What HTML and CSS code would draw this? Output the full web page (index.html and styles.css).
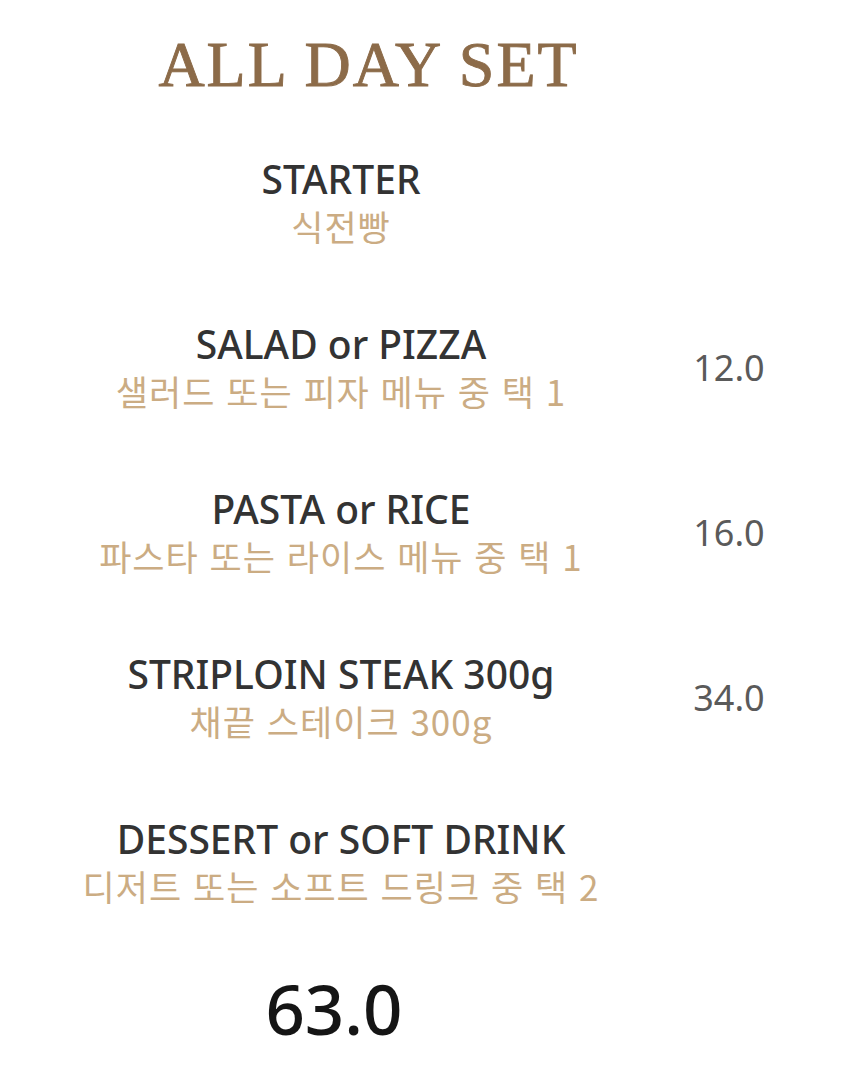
FILE: index.html
```html
<!DOCTYPE html>
<html lang="ko">
<head>
<meta charset="utf-8">
<title>ALL DAY SET</title>
<link rel="stylesheet" href="styles.css">
</head>
<body>
<main class="menu">
  <h1 class="title">ALL DAY SET</h1>
  <ul class="items">
    <li class="item">
      <div class="names">
        <div class="en">STARTER</div>
        <div class="ko">식전빵</div>
      </div>
      <div class="price"></div>
    </li>
    <li class="item">
      <div class="names">
        <div class="en">SALAD or PIZZA</div>
        <div class="ko">샐러드 또는 피자 메뉴 중 택 1</div>
      </div>
      <div class="price">12.0</div>
    </li>
    <li class="item">
      <div class="names">
        <div class="en">PASTA or RICE</div>
        <div class="ko">파스타 또는 라이스 메뉴 중 택 1</div>
      </div>
      <div class="price">16.0</div>
    </li>
    <li class="item">
      <div class="names">
        <div class="en">STRIPLOIN STEAK 300g</div>
        <div class="ko">채끝 스테이크 300g</div>
      </div>
      <div class="price">34.0</div>
    </li>
    <li class="item">
      <div class="names">
        <div class="en">DESSERT or SOFT DRINK</div>
        <div class="ko">디저트 또는 소프트 드링크 중 택 2</div>
      </div>
      <div class="price"></div>
    </li>
  </ul>
  <div class="total">63.0</div>
</main>
</body>
</html>
```
FILE: styles.css
```css
html, body {
  margin: 0;
  padding: 0;
  background: #ffffff;
}

.menu {
  width: 850px;
  height: 1068px;
  overflow: hidden;
  font-family: "Noto Sans", "Noto Sans CJK KR", sans-serif;
}

.title {
  margin: 0;
  padding-top: 33px;
  padding-left: 2px;
  width: 733px;
  text-align: center;
  font-family: "Liberation Serif", "Times New Roman", serif;
  font-weight: normal;
  font-size: 64px;
  line-height: 64px;
  letter-spacing: 2px;
  -webkit-text-stroke: 0.9px #8c6b49;
  color: #8c6b49;
}

.items {
  list-style: none;
  margin: 60px 0 0;
  padding: 0;
  display: flex;
  flex-direction: column;
  gap: 74px;
}

.item {
  display: grid;
  grid-template-columns: 682px 94px;
  align-items: center;
}

.names {
  display: flex;
  flex-direction: column;
  align-items: center;
  gap: 3px;
}

.en {
  font-family: "Noto Sans", sans-serif;
  font-weight: 500;
  font-size: 39px;
  line-height: 44px;
  color: #333333;
}

.ko {
  font-family: "Noto Sans CJK KR", "Noto Sans", sans-serif;
  font-weight: 400;
  font-size: 35px;
  line-height: 44px;
  letter-spacing: 1px;
  color: #cbac83;
}

.price {
  text-align: center;
  font-family: "Noto Sans", sans-serif;
  font-size: 36px;
  line-height: 44px;
  color: #5a5a5a;
}

.total {
  width: 668px;
  margin-top: 65px;
  text-align: center;
  font-family: "Noto Sans", sans-serif;
  font-weight: 500;
  font-size: 69px;
  line-height: 70px;
  color: #151515;
}
```
